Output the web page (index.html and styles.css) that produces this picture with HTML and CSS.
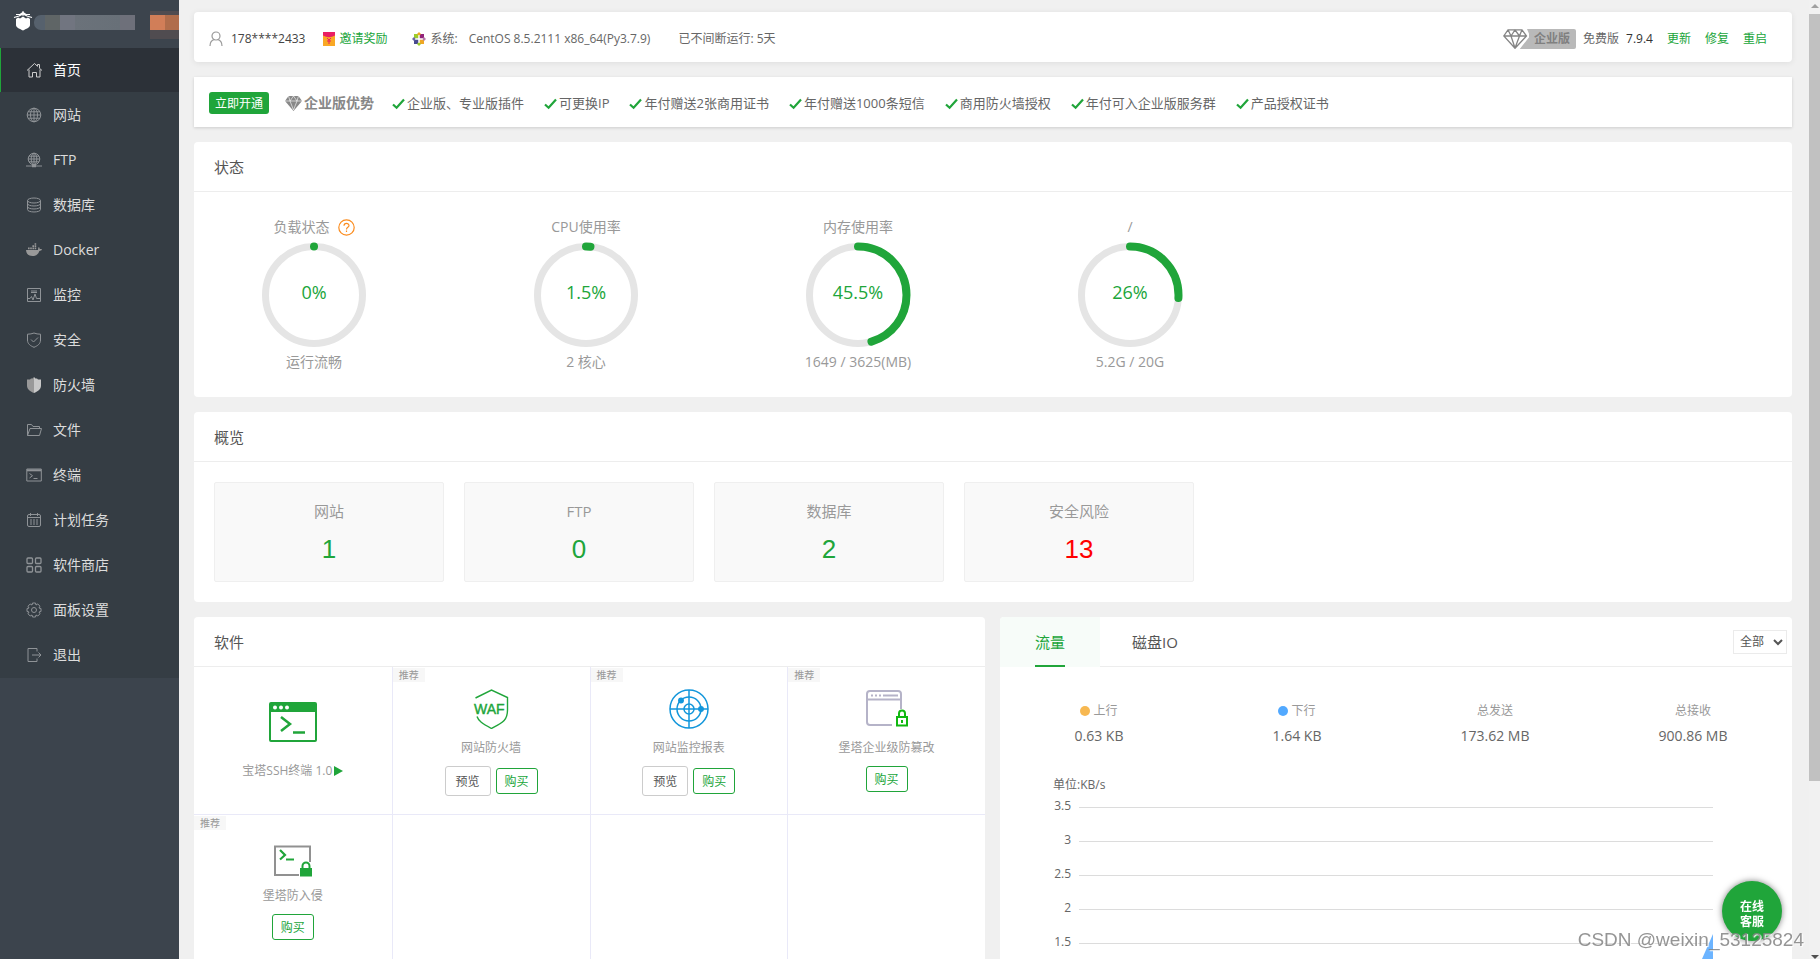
FILE: index.html
```html
<!DOCTYPE html>
<html lang="zh-CN">

<head>
  <meta charset="UTF-8">
  <meta name="viewport" content="width=device-width, initial-scale=1.0">
  <title>首页</title>
  <link rel="stylesheet" href="styles.css">
</head>

<body>
  <!-- 公用图标 -->
  <svg class="sprite" aria-hidden="true">
    <symbol id="check" viewBox="0 0 13 13"><path d="M1 7.5l3.6 3.3L12 2.5" fill="none" stroke="#20a53a" stroke-width="2.2" /></symbol>
  </svg>

  <div class="sidebar">
    <div class="logo">
      <svg class="logo-icon" width="20" height="20" viewBox="0 0 20 20" fill="#fff">
        <path d="M3 3.500h4l3-2 3 2h4M1 6.500L6 5l4-2 4 2 5 1.500" fill="none" stroke="#fff" stroke-width="1.200" />
        <path d="M10 0v5" stroke="#fff" />
        <path d="M3 8l2-1.500 2 1 3-2 3 2 2-1 2 1.500v6c0 2.500-4 4-7 5.500-3-1.500-7-3-7-5.500z" />
      </svg>
      <span class="host"></span>
      <span class="msg"></span>
    </div>
    <ul class="menu">
      <li><a class="active" href="#"><svg viewBox="0 0 16 16"><path d="M1 8.500L8.500 1.500l3 2.800V2.500h2v3.800L16 8.500M3 7.500V15h3.500v-4.500h4V15H14V7.500" /></svg>首页</a></li>
      <li><a href="#"><svg viewBox="0 0 16 16"><circle cx="8" cy="8" r="6.800" /><ellipse cx="8" cy="8" rx="3.500" ry="6.800" /><path d="M8 1v14M1 8h14M2 4.800h12M2 11.200h12" /></svg>网站</a></li>
      <li><a href="#"><svg viewBox="0 0 16 16"><circle cx="8" cy="7" r="5.800" /><ellipse cx="8" cy="7" rx="2.800" ry="5.800" /><path d="M8 1v12M2 7h12M3 4.200h10M3 9.800h10M0 14h16" /><path d="M6 14h4" stroke-width="2.500" /></svg>FTP</a></li>
      <li><a href="#"><svg viewBox="0 0 16 16"><ellipse cx="8" cy="3.500" rx="6.500" ry="2.500" /><path d="M1.500 3.500v9c0 3.300 13 3.300 13 0v-9M1.500 6.500c0 3.300 13 3.300 13 0M1.500 9.500c0 3.300 13 3.300 13 0" /></svg>数据库</a></li>
      <li><a href="#"><svg class="solid" viewBox="0 0 16 16"><path d="M0 8h12c.2-1 0-2 .8-3 .8.800 1 1.500 1 2.200.8-.2 1.500-.1 2.200.4-.6 1.100-1.500 1.400-2.600 1.400C12.300 12.500 10 14 6.500 14 2.500 14 .500 12 0 8zM2 5.500h1.600v1.700H2zM4.200 5.500h1.600v1.700H4.200zM6.400 5.500H8v1.700H6.400zM8.600 5.500h1.600v1.700H8.600zM6.400 3.300H8V5H6.400zM8.600 3.300h1.600V5H8.600zM8.600 1.200h1.600v1.600H8.600z" /></svg>Docker</a></li>
      <li><a href="#"><svg viewBox="0 0 16 16"><path d="M1.500 1.500h13v13h-13zM1.500 11.500H4l1.500-2 1.500 3.500 2-6 1.500 4.500h4M5 4h6M5 5.500h6" /></svg>监控</a></li>
      <li><a href="#"><svg viewBox="0 0 16 16"><path d="M8 1c2 .8 4 1.200 6.500 1.200V8c0 4-3 5.800-6.500 7.300C4.500 13.800 1.500 12 1.500 8V2.200C4 2.200 6 1.800 8 1zM5 7.500L7.500 10 12 5.500" /></svg>安全</a></li>
      <li><a href="#"><svg class="solid" viewBox="0 0 16 16"><path d="M8 0L6.500 1.500H5l-1 1H1v6c0 4 3.500 6 7 7.500z" /><path d="M8 0l1.500 1.500H11l1 1h3v6c0 4-3.500 6-7 7.500z" fill="#c8c8c8" /></svg>防火墙</a></li>
      <li><a href="#"><svg viewBox="0 0 16 16"><path d="M1.500 13.500v-11h4l1.500 2h6.500v2M1.500 13.500l2.500-7h11.500l-2 7z" /></svg>文件</a></li>
      <li><a href="#"><svg viewBox="0 0 16 16"><path d="M.8 2h14.500v12H.8zM3.500 6.500l3 2.200-3 2.300M7.500 11.500h4" /><path d="M1 3.300h14" stroke-width="2" /></svg>终端</a></li>
      <li><a href="#"><svg viewBox="0 0 16 16"><rect x="1.500" y="2.500" width="13" height="12" rx="1.500" /><path d="M1.500 5.500h13M4.500 1v3M11.500 1v3" /><path d="M4 8h9M4 10h9M4 12h9" stroke-dasharray="2 1" /></svg>计划任务</a></li>
      <li><a href="#"><svg viewBox="0 0 16 16" stroke-width="1.300"><rect x="1" y="1" width="5.500" height="5.500" rx="1" /><rect x="9.500" y="1" width="5.500" height="5.500" rx="1" /><rect x="1" y="9.500" width="5.500" height="5.500" rx="1" /><rect x="9.500" y="9.500" width="5.500" height="5.500" rx="1" /></svg>软件商店</a></li>
      <li><a href="#"><svg viewBox="0 0 16 16"><path d="M6.500 1h3l.5 2 1.800-1 2.200 2.200-1 1.800 2 .5v3l-2 .5 1 1.800-2.200 2.200-1.800-1-.5 2h-3L6 13l-1.800 1L2 11.800 3 10l-2-.5v-3L3 6 2 4.200 4.200 2 6 3z" /><circle cx="8" cy="8" r="2.500" /></svg>面板设置</a></li>
      <li><a href="#"><svg viewBox="0 0 16 16"><path d="M11 4.500v-3H2v13h9v-3M6 8h9M12.500 5.500L15 8l-2.500 2.500" /></svg>退出</a></li>
    </ul>
  </div>

  <div class="main">
    <div class="topbar">
      <span class="user">
        <svg width="14" height="16" viewBox="0 0 14 16" fill="none" stroke="#999" stroke-width="1.200"><circle cx="7" cy="5" r="4" /><path d="M1 15c0-4 2-6 4.500-6.500M13 15c0-4-2-6-4.500-6.500" /></svg>
        178****2433
      </span>
      <a class="invite" href="#">
        <svg width="12" height="14" viewBox="0 0 12 14"><path d="M0 0h12v14H0z" fill="#f9a825" /><path d="M0 0h12v3.500Q6 7 0 3.500z" fill="#e91e63" /><path d="M4 6l2 2 2-2M6 8v4M4 9h4" fill="none" stroke="#e91e63" /></svg>
        邀请奖励
      </a>
      <span class="system">
        <svg width="14" height="14" viewBox="0 0 14 14"><path d="M2 2h4.500v4.500H2z" fill="#9ccd2a" /><path d="M7.500 2H12v4.500H7.500z" fill="#932279" /><path d="M2 7.500h4.500V12H2z" fill="#4a4a90" /><path d="M7.500 7.500H12V12H7.500z" fill="#efa724" /><path d="M7 0l2 2-2 2-2-2z" fill="#efa724" /><path d="M14 7l-2 2-2-2 2-2z" fill="#b57aa8" /><path d="M7 14l-2-2 2-2 2 2z" fill="#9ccd2a" /><path d="M0 7l2-2 2 2-2 2z" fill="#6a6aa5" /><path d="M7 3v8M3 7h8" stroke="#fff" /></svg>
        系统:
      </span>
      <span class="os">CentOS 8.5.2111 x86_64(Py3.7.9)</span>
      <span class="uptime">已不间断运行: 5天</span>
      <div class="version">
        <a class="ent" href="#">
          <svg width="26" height="20" viewBox="0 0 26 20" fill="none" stroke="#858585" stroke-width="1.300"><path d="M24 0l3 7-11 14h12V0z" fill="#b9b9b9" stroke="none" /><path d="M21 0l5.500 7L16 20h-4V0z" fill="#fff" stroke="none" /><path d="M5 .8h14L23.500 7 12 19.300 .8 7zM.8 7h22.700M5 .8L8 7l4 12 4.500-12L19 .8M8 7l4-6 4.500 6" /></svg>
          <span>企业版</span>
        </a>
        <span>免费版</span>
        <span class="num">7.9.4</span>
        <a href="#">更新</a>
        <a href="#">修复</a>
        <a href="#">重启</a>
      </div>
    </div>

    <div class="promo">
      <button class="open" type="button">立即开通</button>
      <span class="adv">
        <svg width="17" height="15" viewBox="0 0 17 15"><path d="M3.500 0h10L17 5l-8.500 10L0 5z" fill="#888" /><path d="M0 5h17M5 5l3.500 9L12 5M5 5L3.500 0M5 5l3.500-5L12 5l1.500-5" fill="none" stroke="#fff" stroke-width=".6" /></svg>
        企业版优势
      </span>
      <span class="item"><svg><use href="#check" /></svg>企业版、专业版插件</span>
      <span class="item"><svg><use href="#check" /></svg>可更换IP</span>
      <span class="item"><svg><use href="#check" /></svg>年付赠送2张商用证书</span>
      <span class="item"><svg><use href="#check" /></svg>年付赠送1000条短信</span>
      <span class="item"><svg><use href="#check" /></svg>商用防火墙授权</span>
      <span class="item"><svg><use href="#check" /></svg>年付可入企业版服务群</span>
      <span class="item"><svg><use href="#check" /></svg>产品授权证书</span>
    </div>

    <div class="panel">
      <h3>状态</h3>
      <div class="status">
        <div class="gauge">
          <p class="name">负载状态
            <svg width="17" height="17" viewBox="0 0 17 17" fill="none" stroke="#fb8c1e" stroke-width="1.200"><circle cx="8.500" cy="8.500" r="7.700" /><path d="M6 6.800c0-3.300 5-3.100 5-.3 0 1.800-2.500 1.900-2.500 3.900M8.500 11.600v1.400" /></svg>
          </p>
          <div class="ring">
            <svg viewBox="0 0 106 106"><circle class="track" cx="53" cy="53" r="48.500" /><circle class="bar" cx="53" cy="53" r="48.500" pathLength="100" stroke-dasharray="0.01 100" /></svg>
            <span>0%</span>
          </div>
          <p>运行流畅</p>
        </div>
        <div class="gauge">
          <p class="name">CPU使用率</p>
          <div class="ring">
            <svg viewBox="0 0 106 106"><circle class="track" cx="53" cy="53" r="48.500" /><circle class="bar" cx="53" cy="53" r="48.500" pathLength="100" stroke-dasharray="1.5 100" /></svg>
            <span>1.5%</span>
          </div>
          <p>2 核心</p>
        </div>
        <div class="gauge">
          <p class="name">内存使用率</p>
          <div class="ring">
            <svg viewBox="0 0 106 106"><circle class="track" cx="53" cy="53" r="48.500" /><circle class="bar" cx="53" cy="53" r="48.500" pathLength="100" stroke-dasharray="45.5 100" /></svg>
            <span>45.5%</span>
          </div>
          <p>1649 / 3625(MB)</p>
        </div>
        <div class="gauge">
          <p class="name">/</p>
          <div class="ring">
            <svg viewBox="0 0 106 106"><circle class="track" cx="53" cy="53" r="48.500" /><circle class="bar" cx="53" cy="53" r="48.500" pathLength="100" stroke-dasharray="26 100" /></svg>
            <span>26%</span>
          </div>
          <p>5.2G / 20G</p>
        </div>
      </div>
    </div>

    <div class="panel">
      <h3>概览</h3>
      <div class="overview">
        <div class="card"><p>网站</p><a href="#">1</a></div>
        <div class="card"><p>FTP</p><a href="#">0</a></div>
        <div class="card"><p>数据库</p><a href="#">2</a></div>
        <div class="card"><p>安全风险</p><a class="danger" href="#">13</a></div>
      </div>
    </div>

    <div class="bottom">
      <div class="panel">
        <h3>软件</h3>
        <div class="soft">
          <div class="cell ssh">
            <svg width="48" height="40" viewBox="0 0 48 40"><rect x="1" y="1" width="46" height="38" rx="1" fill="none" stroke="#20a53a" stroke-width="2" /><path d="M1 1h46v9H1z" fill="#20a53a" /><circle cx="6" cy="5.500" r="2" fill="#fff" /><circle cx="12" cy="5.500" r="2" fill="#fff" /><circle cx="18" cy="5.500" r="2" fill="#fff" /><path d="M12 15l9 7-9 7M24 30.500h12" fill="none" stroke="#20a53a" stroke-width="2.500" /></svg>
            <p>宝塔SSH终端 1.0<svg width="9" height="12" viewBox="0 0 9 12"><path d="M0 1l9 5-9 5z" fill="#20a53a" /></svg></p>
          </div>
          <div class="cell">
            <span class="tag">推荐</span>
            <svg width="40" height="40" viewBox="0 0 40 40"><path d="M4.500 9L20.500 1 36.500 8.500V21c0 10-4 12-16 18.500C11 34.500 7.500 32 6 27.500" fill="none" stroke="#20a53a" stroke-width="1.400" /><text x="3" y="25" class="waf">WAF</text></svg>
            <p>网站防火墙</p>
            <div class="btns"><button type="button" class="view">预览</button><button type="button">购买</button></div>
          </div>
          <div class="cell">
            <span class="tag">推荐</span>
            <svg width="40" height="40" viewBox="0 0 40 40" fill="none" stroke="#1296db" stroke-width="1.500"><circle cx="20" cy="20" r="19" /><circle cx="20" cy="20" r="12" /><circle cx="20" cy="20" r="5" /><path d="M20 1v38M1 20h38" /><circle cx="12" cy="11.500" r="2.200" fill="#1296db" /><circle cx="32" cy="20" r="2.200" fill="#1296db" /></svg>
            <p>网站监控报表</p>
            <div class="btns"><button type="button" class="view">预览</button><button type="button">购买</button></div>
          </div>
          <div class="cell">
            <span class="tag">推荐</span>
            <svg width="44" height="40" viewBox="0 0 44 40" fill="none" stroke="#b5b3c8" stroke-width="2"><path d="M36 20V5a3 3 0 0 0-3-3H5a3 3 0 0 0-3 3v28a3 3 0 0 0 3 3h22M2 10.500h34" /><path d="M6 6.500h2M10 6.500h2M14 6.500h2M18 6.500h15" /><path d="M32 28h10v8.500H32zM34 28v-3.500a3 3 0 0 1 6 0V28M37 31v3" stroke="#11b811" /></svg>
            <p>堡塔企业级防篡改</p>
            <div class="btns"><button type="button">购买</button></div>
          </div>
          <div class="cell">
            <span class="tag">推荐</span>
            <svg width="40" height="40" viewBox="0 0 40 40"><path d="M37 25V9.500H2v28.500h24" fill="none" stroke="#919191" stroke-width="2" /><path d="M7 13l5 5-5 4.500M13 22.500h8" fill="none" stroke="#20a53a" stroke-width="2.200" /><path d="M27 31h12v8.500H27z" fill="#20a53a" /><path d="M29.500 32v-3a3.500 3.500 0 0 1 7 0v3" fill="none" stroke="#20a53a" stroke-width="2" /></svg>
            <p>堡塔防入侵</p>
            <div class="btns"><button type="button">购买</button></div>
          </div>
          <div class="cell"></div>
          <div class="cell"></div>
          <div class="cell"></div>
        </div>
      </div>

      <div class="panel">
        <div class="tabs">
          <button type="button" class="tab on"><span>流量</span></button>
          <button type="button" class="tab"><span>磁盘IO</span></button>
          <select class="net" aria-label="网卡">
            <option>全部</option>
          </select>
        </div>
        <div class="stats">
          <div><p><i class="dot up"></i>上行</p><b>0.63 KB</b></div>
          <div><p><i class="dot down"></i>下行</p><b>1.64 KB</b></div>
          <div><p>总发送</p><b>173.62 MB</b></div>
          <div><p>总接收</p><b>900.86 MB</b></div>
        </div>
        <div class="chart">
          <p class="unit">单位:KB/s</p>
          <div class="line"><span>3.5</span></div>
          <div class="line"><span>3</span></div>
          <div class="line"><span>2.5</span></div>
          <div class="line"><span>2</span></div>
          <div class="line"><span>1.5</span></div>
          <svg class="area" width="30" height="68" viewBox="0 0 30 68"><path d="M30 0v68H0z" fill="#6cb4ff" /></svg>
        </div>
      </div>
    </div>
  </div>

  <button type="button" class="service">在线<br>客服</button>
  <div class="mark">CSDN @weixin_53125824</div>
  <div class="scroll">
    <span class="arrow-up"></span>
    <span class="thumb"></span>
    <span class="arrow-down"></span>
  </div>
</body>

</html>
```
FILE: styles.css
```css
* {
  box-sizing: border-box;
}

body {
  display: flex;
  height: 100vh;
  margin: 0;
  overflow: hidden;
  background: #f0f0f0;
  color: #666;
  font: 12px/20px "Open Sans", "Noto Sans CJK SC", sans-serif;
}

p,
h3,
ul {
  margin: 0;
  padding: 0;
}

a {
  color: #20a53a;
  text-decoration: none;
}

button,
select {
  font-family: inherit;
  cursor: pointer;
}

.sprite {
  position: absolute;
  width: 0;
  height: 0;
}

/* 左侧菜单 */
.sidebar {
  flex: none;
  width: 179px;
  background: #3c444d;
}

.logo {
  display: flex;
  align-items: flex-start;
  height: 48px;
  padding: 11px 0 0 13px;
}

.host {
  width: 101px;
  height: 15px;
  margin: 4px 15px 0 1px;
  border-radius: 7px 0 0 7px;
  background: linear-gradient(90deg, #56616d 11px, #5f6566 11px, #5f6566 26px, #717580 26px, #717580 41px, #6b727a 41px, #687078 86px, #6e707a 86px);
}

.msg {
  width: 29px;
  height: 28px;
  background: linear-gradient(90deg, #d17e58 15px, #b06d4b 15px) 0 4px / 29px 15px no-repeat, #504c50;
}

.menu {
  list-style: none;
  background: #353d44;
}

.menu li {
  border-bottom: 1px solid #353d44;
}

.menu a {
  display: flex;
  align-items: center;
  gap: 11px;
  height: 44px;
  padding-left: 25px;
  border-left: 1px solid #353d44;
  color: #dcdcdc;
  font-size: 14px;
}

.menu a.active {
  background: #2c3138;
  border-color: #20a53a;
  color: #fff;
}

.menu svg {
  width: 16px;
  height: 16px;
  fill: none;
  stroke: #8f9397;
}

.menu .active svg {
  stroke: #ccc;
}

.menu svg.solid {
  fill: #999;
  stroke: none;
}

/* 右侧内容 */
.main {
  flex: 1;
  display: flex;
  flex-direction: column;
  gap: 15px;
  min-width: 0;
  padding: 12px 28px 0 15px;
}

.main > * {
  flex: none;
}

.topbar {
  display: flex;
  align-items: center;
  height: 50px;
  padding: 3px 25px 0 15px;
  background: #fff;
  border-radius: 4px;
  box-shadow: 0 1px 6px rgba(0, 0, 0, 0.08);
  white-space: nowrap;
}

.user,
.invite,
.system {
  display: flex;
  align-items: center;
  gap: 4px;
}

.user {
  gap: 8px;
  margin-right: 18px;
  color: #444;
}

.system {
  margin: 0 11px 0 25px;
}

.uptime {
  margin-left: 28px;
}

.version {
  display: flex;
  align-items: center;
  gap: 14px;
  margin-left: auto;
}

.version .ent {
  display: flex;
  margin-right: -7px;
}

.ent span {
  padding: 0 6px 0 5px;
  background: #b9b9b9;
  border-radius: 0 2px 2px 0;
  color: #808080;
  font-weight: bold;
}

.version .num {
  margin-left: -7px;
  color: #333;
}

.promo {
  display: flex;
  align-items: center;
  height: 50px;
  padding: 2px 0 0 15px;
  background: #fff;
  box-shadow: 0 1px 3px rgba(0, 0, 0, 0.15);
  font-size: 13px;
  white-space: nowrap;
}

.open {
  width: 60px;
  height: 22px;
  padding: 0;
  border: none;
  border-radius: 3px;
  background: #20a53a;
  color: #fff;
  font-size: 12px;
}

.adv {
  display: flex;
  align-items: center;
  gap: 2px;
  margin-left: 16px;
  color: #888;
  font-size: 14px;
  font-weight: bold;
}

.item {
  display: flex;
  align-items: center;
  gap: 2px;
  margin-left: 20px;
}

.adv + .item {
  margin-left: 18px;
}

.item svg {
  width: 13px;
  height: 13px;
}

.panel {
  background: #fff;
  border-radius: 4px;
}

.panel h3 {
  height: 50px;
  padding-left: 20px;
  border-bottom: 1px solid #ededed;
  color: #555;
  font-size: 15px;
  font-weight: normal;
  line-height: 50px;
}

.status {
  display: flex;
  gap: 72px;
  padding: 25px 20px;
}

.gauge {
  width: 200px;
  color: #999;
  font-size: 14px;
  text-align: center;
}

.gauge .name {
  display: flex;
  justify-content: center;
  align-items: center;
  gap: 8px;
}

.ring {
  display: grid;
  place-items: center;
  margin: 5px 0 4px;
}

.ring svg {
  grid-area: 1 / 1;
  width: 106px;
  height: 106px;
  fill: none;
  transform: rotate(-90deg);
}

.track {
  stroke: #e5e5e5;
  stroke-width: 7px;
}

.bar {
  stroke: #20a53a;
  stroke-width: 8px;
  stroke-linecap: round;
}

.ring span {
  grid-area: 1 / 1;
  padding-bottom: 6px;
  color: #20a53a;
  font-size: 18px;
}

.overview {
  display: flex;
  gap: 20px;
  padding: 20px;
}

.card {
  width: 230px;
  height: 100px;
  padding-top: 18px;
  border: 1px solid #efefef;
  border-radius: 2px;
  background: #f9f9f9;
  color: #999;
  font-size: 15px;
  text-align: center;
}

.card a {
  display: block;
  margin-top: 13px;
  font: 26px/30px "Liberation Sans", Arial, sans-serif;
}

.card a.danger {
  color: #f00;
}

.bottom {
  display: grid;
  grid-template-columns: calc(50% - 8px) 1fr;
  gap: 15px;
}

/* 软件 */
.soft {
  display: grid;
  grid-template-columns: repeat(4, 1fr);
  grid-auto-rows: 148px;
}

.cell {
  position: relative;
  padding-top: 22px;
  border-left: 1px solid #e9e9f8;
  border-bottom: 1px solid #e9e9f8;
  color: #999;
  text-align: center;
}

.cell:nth-child(4n + 1) {
  border-left: none;
}

.cell > svg {
  display: block;
  margin: 0 auto 9px;
}

.ssh {
  padding-top: 35px;
}

.ssh > svg {
  margin-bottom: 19px;
}

.ssh p {
  display: flex;
  justify-content: center;
  align-items: center;
  gap: 2px;
}

.tag {
  position: absolute;
  left: 0;
  top: 1px;
  width: 32px;
  background: #f7f7f7;
  font-size: 10px;
  line-height: 14px;
}

.waf {
  fill: #20a53a;
  stroke: #20a53a;
  stroke-width: 0.4px;
  font: 14px "Liberation Sans", Arial, sans-serif;
}

.btns {
  display: flex;
  justify-content: center;
  align-items: center;
  gap: 5px;
  margin-top: 8px;
}

.btns button {
  width: 42px;
  height: 26px;
  padding: 0;
  border: 1px solid #20a53a;
  border-radius: 3px;
  background: #fff;
  color: #20a53a;
  font-size: 12px;
}

.btns .view {
  width: 46px;
  height: 30px;
  border-color: #ccc;
  color: #555;
}

/* 流量 */
.tabs {
  display: flex;
  align-items: center;
  height: 50px;
  padding-right: 5px;
  border-bottom: 1px solid #ededed;
}

.tab {
  width: 110px;
  height: 50px;
  padding: 0;
  border: none;
  background: none;
  color: #555;
  font-size: 15px;
}

.tab.on {
  width: 100px;
  border-radius: 4px 0 0 0;
  background: #f7fcf9;
  color: #20a53a;
}

.tab span {
  display: inline-block;
  padding-top: 2px;
  line-height: 46px;
  border-bottom: 2px solid transparent;
}

.tab.on span {
  border-color: #20a53a;
}

.net {
  width: 54px;
  height: 24px;
  margin-left: auto;
  padding: 0 2px;
  border: 1px solid #ebebeb;
  background: #fff;
  color: #555;
  font-size: 12px;
}

.stats {
  display: grid;
  grid-template-columns: repeat(4, 1fr);
  padding-top: 34px;
  color: #999;
  text-align: center;
}

.stats b {
  display: block;
  margin-top: 5px;
  color: #666;
  font-size: 14px;
  font-weight: normal;
}

.dot {
  display: inline-block;
  width: 10px;
  height: 10px;
  margin-right: 3px;
  border-radius: 50%;
  vertical-align: -1px;
}

.up {
  background: #f7b851;
}

.down {
  background: #52a9ff;
}

.chart {
  position: relative;
  padding: 29px 79px 0 53px;
}

.line {
  display: flex;
  align-items: center;
  gap: 8px;
  height: 34px;
}

.unit {
  margin-bottom: -5px;
}

.line span {
  width: 18px;
  padding-bottom: 3px;
  text-align: right;
}

.line:after {
  content: '';
  flex: 1;
  height: 1px;
  background: #dcdcdc;
}

.area {
  position: absolute;
  right: 79px;
  top: 188px;
}

/* 悬浮 */
.service {
  position: fixed;
  right: 38px;
  bottom: 18px;
  width: 60px;
  height: 60px;
  padding: 5px 0 0;
  border: none;
  border-radius: 50%;
  background: #20a53a;
  box-shadow: 0 0 6px rgba(0, 0, 0, 0.5);
  color: #fff;
  font-size: 12px;
  font-weight: bold;
  line-height: 15px;
}

.mark {
  position: fixed;
  right: 16px;
  bottom: 7px;
  color: rgba(130, 130, 130, 0.85);
  font: 19px/24px "Liberation Sans", Arial, sans-serif;
  text-shadow: 1px 1px 1px #fff;
}

.scroll {
  position: fixed;
  top: 0;
  right: 0;
  bottom: 0;
  display: flex;
  flex-direction: column;
  align-items: center;
  width: 11px;
  background: #f1f1f1;
}

.thumb {
  width: 100%;
  height: 80%;
  background: #c1c1c1;
}

.arrow-up {
  margin: 4px 0 6px;
  border: 4px solid transparent;
  border-top: none;
  border-bottom-color: #a0a0a0;
}

.arrow-down {
  margin: auto 0 0;
  border: 4px solid transparent;
  border-bottom: none;
  border-top-color: #505050;
}
```
